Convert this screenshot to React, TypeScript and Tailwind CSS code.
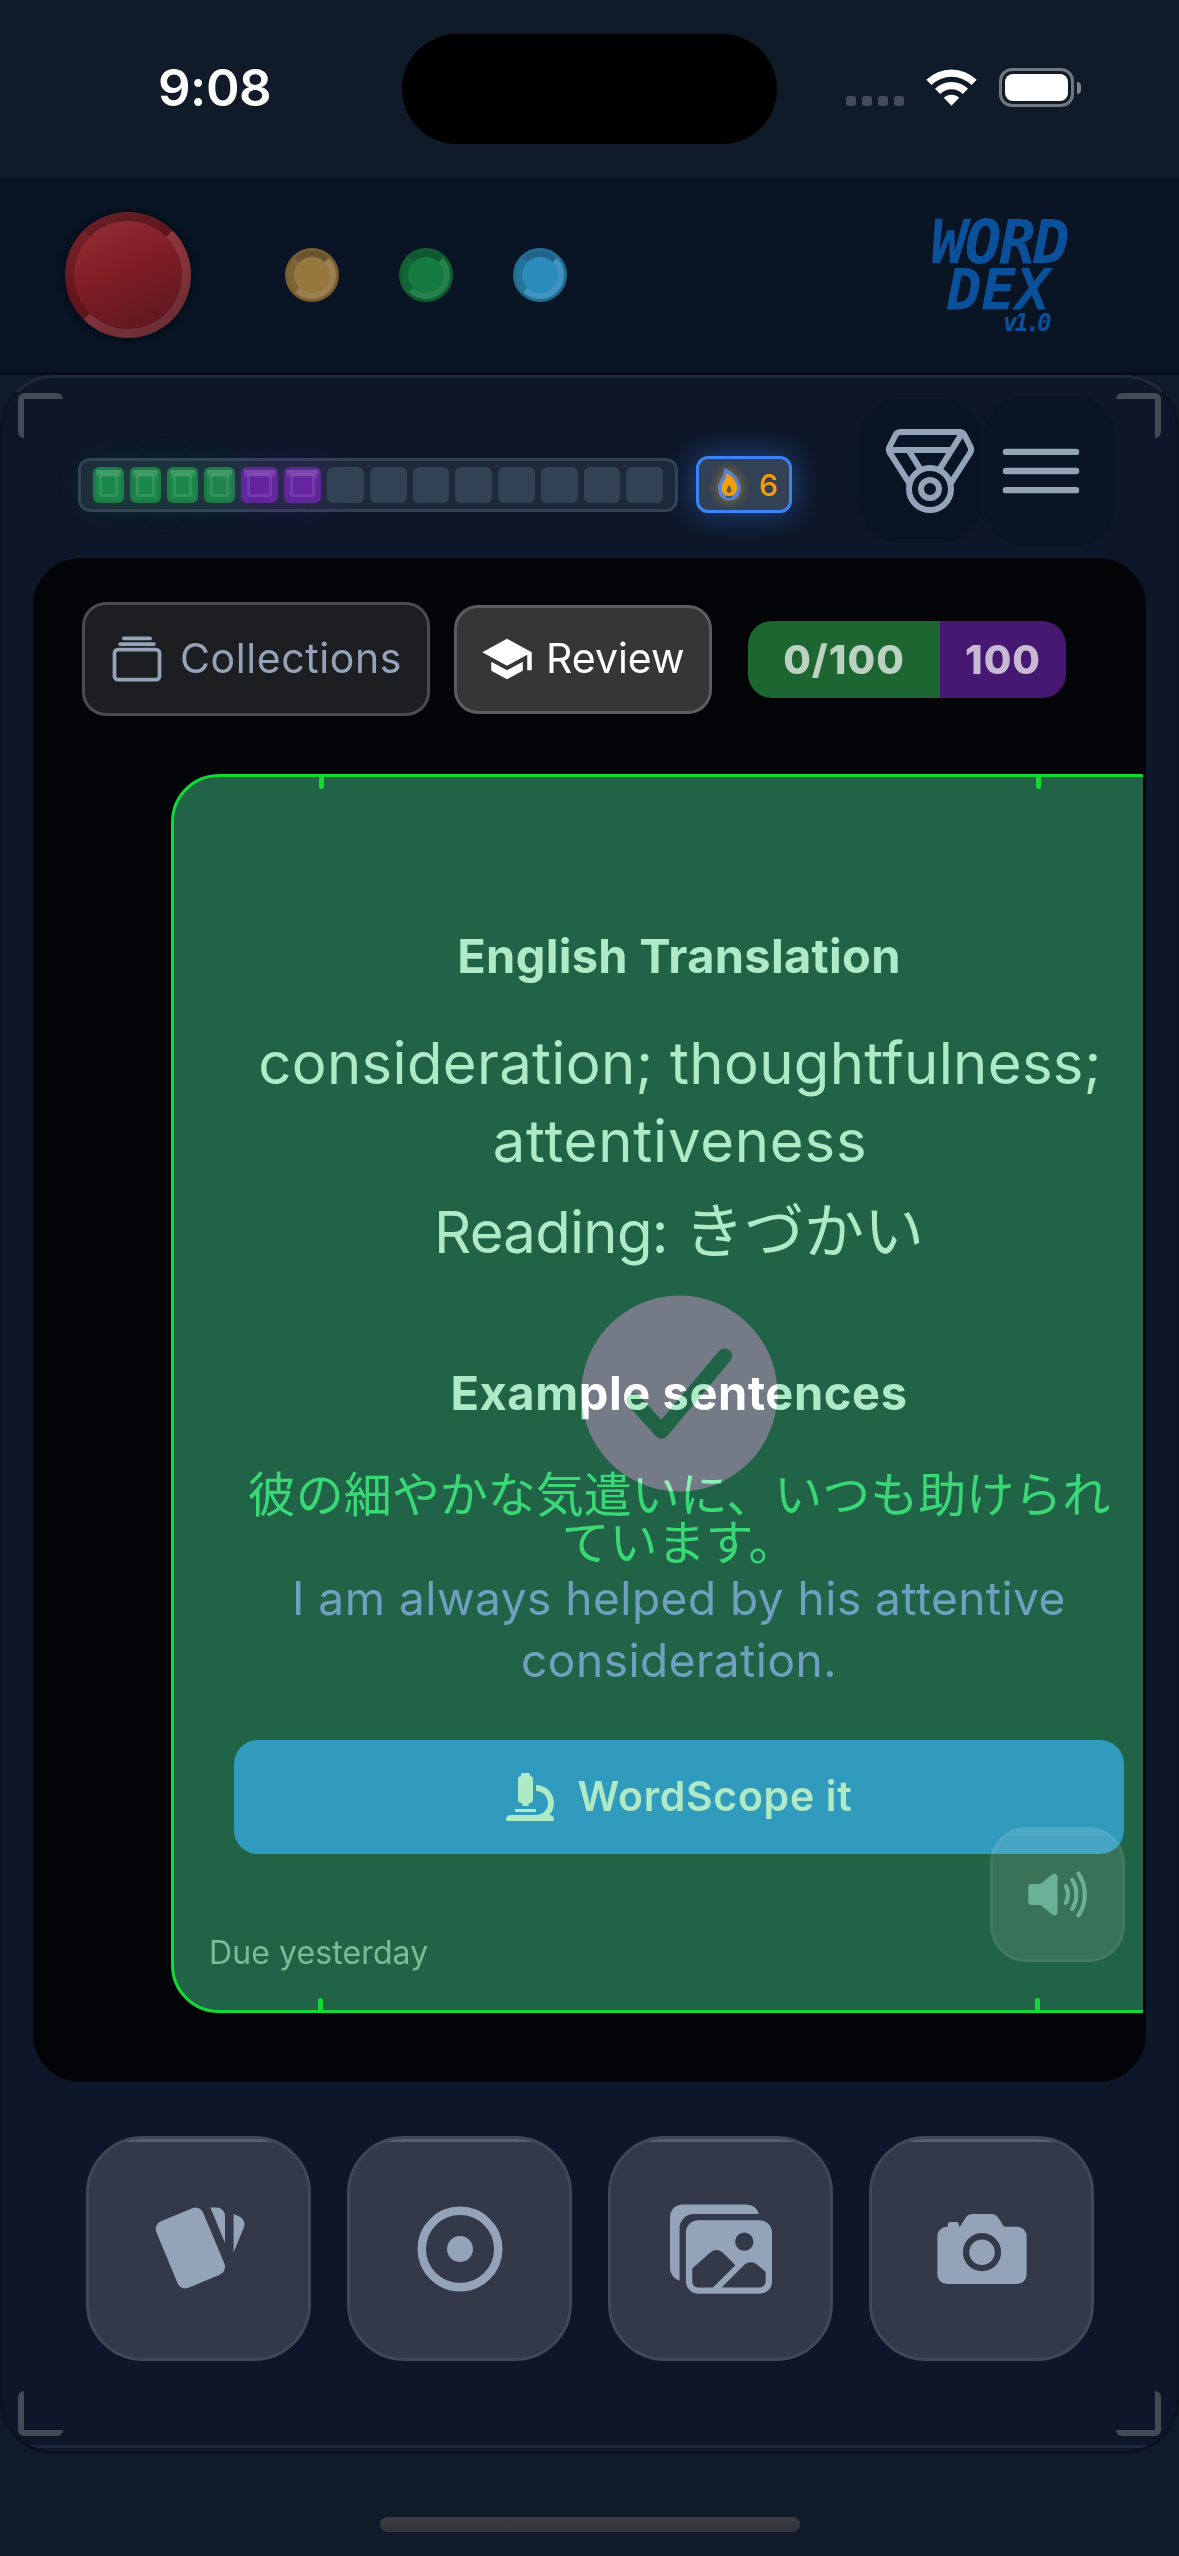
import type { ReactNode } from 'react';
import { FaMicroscope } from 'react-icons/fa';
import {
  IoAlbumsOutline,
  IoCamera,
  IoCheckmarkCircle,
  IoImages,
  IoMedalOutline,
  IoMenuOutline,
  IoVolumeHigh,
} from 'react-icons/io5';
import { MdSchool } from 'react-icons/md';

const SEGMENTS = [
  ...Array(4).fill('learned'),
  ...Array(2).fill('review'),
  ...Array(8).fill('empty'),
];

const LIGHTS = [
  {
    name: 'amber',
    outer: 'bg-[#775f31]',
    inner: 'bg-[#96783f] border-t-[#6b5430] border-l-[#7d6336] border-r-[#9a8051] border-b-[#9a8051]',
  },
  {
    name: 'green',
    outer: 'bg-[#115f31]',
    inner: 'bg-[#147a3f] border-t-[#0f5830] border-l-[#106636] border-r-[#27814e] border-b-[#27814e]',
  },
  {
    name: 'blue',
    outer: 'bg-[#226e93]',
    inner: 'bg-[#2b8bba] border-t-[#216487] border-l-[#24749b] border-r-[#4093be] border-b-[#4093be]',
  },
];

function StatusBar() {
  return (
    <div className="flex h-[177px] shrink-0 items-start pl-[158px]">
      <div className="mt-[58px] w-[244px] text-[51px] leading-[60px] font-semibold tracking-[-0.5px] text-white">9:08</div>
      <div className="mt-[34px] h-[110px] w-[375px] rounded-full bg-black" />
      <div className="mt-[67px] ml-[69px] flex w-[235px] items-start">
        <div className="mt-[29px] flex gap-[6px]">
          {[0, 1, 2, 3].map((i) => (
            <div key={i} className="size-[10px] rounded-[3px] bg-[#424b57]" />
          ))}
        </div>
        <svg className="mt-[2px] ml-[22px] h-[37px] w-[51px]" viewBox="0 0 51 37" fill="#fff">
          <path d="M0.3 10.8 A36 36 0 0 1 50.7 10.8 L45.5 16 A28.5 28.5 0 0 0 5.5 16 Z" />
          <path d="M9 19.8 A23.500 23.500 0 0 1 42 19.800 L36.800 25 A16 16 0 0 0 14.200 25 Z" />
          <path d="M17.8 28.800 A11 11 0 0 1 33.200 28.800 L25.500 36.800 Z" />
        </svg>
        <div className="mt-px ml-[22px] h-[39px] w-[75px] rounded-[13px] border-[3px] border-[#70777f] p-[3px]">
          <div className="h-full rounded-[8px] bg-white" />
        </div>
        <div className="mt-[15px] ml-[3px] h-[12px] w-[4px] rounded-r-full bg-[#7d848b]" />
      </div>
    </div>
  );
}

function Header() {
  return (
    <div className="flex h-[198px] shrink-0 items-start border-b-[3px] border-[#040c1b] bg-[#091424] pl-[65px]">
      <div className="mt-[35px] size-[126px] rounded-full border-[9px] border-t-black/30 border-r-white/10 border-b-white/10 border-l-black/20 bg-linear-[155deg] from-[#99333b] via-[#801d25] via-45% to-[#52171f] bg-origin-border shadow-[0_0_4px_4px_#07101d]" />
      <div className="mt-[71px] ml-[94px] flex gap-[60px]">
        {LIGHTS.map((light) => (
          <div key={light.name} className={`size-[54px] rounded-full p-[3px] ${light.outer}`}>
            <div className={`size-full rounded-full border-[6px] ${light.inner}`} />
          </div>
        ))}
      </div>
      <div className="mt-[41px] ml-[364px] flex w-[150px] flex-col font-['DejaVu_Sans_Mono'] font-bold text-[#0b509b] italic">
        <div className="text-[60px] leading-[48px] tracking-[-2px]">WORD</div>
        <div className="pl-[16px] text-[57px] leading-[48px] tracking-[0px]">DEX</div>
        <div className="pl-[72px] text-[24px] leading-[18px] tracking-[-3px]">v1.0</div>
      </div>
    </div>
  );
}

function Segment({ kind }: { kind: string }) {
  if (kind === 'empty') {
    return <div className="h-[36px] flex-1 rounded-[6px] bg-[#334155]" />;
  }
  const color =
    kind === 'learned'
      ? 'w-[31px] bg-[#1b864a] border-[#1f7a47] shadow-[0_0_36px_rgba(34,197,94,0.22)]'
      : 'w-[37px] bg-[#64249f] border-[#5c2a93] shadow-[0_0_36px_rgba(147,51,234,0.25)]';
  return (
    <div className={`h-[36px] shrink-0 rounded-[6px] border-[3px] ${color}`}>
      <div className="h-full bg-linear-to-b from-white/20 to-transparent to-30% p-[3px]">
        <div className="h-full rounded-[3px] border-[3px] border-white/10" />
      </div>
    </div>
  );
}

function Flame() {
  return (
    <svg className="h-[33px] w-[24px] drop-shadow-[0_0_6px_rgba(245,158,11,0.6)]" viewBox="0 0 24 33">
      <path d="M7 0 C14 2 23.500 11 23.500 20.500 C23.500 28 18.500 32.500 12 32.500 C6 32.500 1 28 1 20.500 C1 12 8 9 7 0Z" fill="#5585d6" />
      <path d="M9.500 5.500 C14 7 20 13 20 20 C20 25 16.500 28 12 28 C8 28 4.500 25 4.500 20 C4.500 14.500 9.500 12 9.500 5.500Z" fill="#f59e0b" />
      <path d="M12 17 C13.500 19 14.300 20.500 14.300 22.500 C14.300 24 13.300 25 12 25 C10.700 25 9.700 24 9.700 22.500 C9.700 20.500 10.500 19 12 17Z" fill="#6b5a35" />
      <path d="M9 28.500 Q12 30 15 28.500" stroke="#4b4a3c" strokeWidth="1.500" fill="none" />
    </svg>
  );
}

function StatsRow() {
  return (
    <div className="flex h-[180px] shrink-0 items-start pl-[75px]">
      <div className="mt-[80px] flex h-[54px] w-[600px] gap-[6px] rounded-[12px] border-[3px] border-[#334155] bg-[#1e293b] px-[12px] py-[6px]">
        {SEGMENTS.map((kind, i) => (
          <Segment key={i} kind={kind} />
        ))}
      </div>
      <div className="mt-[78px] ml-[18px] flex h-[57px] w-[96px] items-center rounded-[12px] border-[3px] border-[#3b82f6] bg-[#334155] pl-[18px] shadow-[0_0_30px_rgba(59,130,246,0.5)]">
        <Flame />
        <span className="ml-[18px] text-[30px] leading-[36px] font-medium text-[#f59e0b]">6</span>
      </div>
      <div className="mt-[21px] ml-[66px] flex h-[144px] w-[125px] justify-center rounded-[42px] bg-[#091424] pt-[24px] pl-[19px] text-[#94a3b8]">
        <IoMedalOutline className="size-[96px] shrink-0" />
      </div>
      <div className="mt-[18px] ml-px flex h-[150px] w-[132px] items-center justify-center rounded-[42px] bg-[#091424] pr-[18px] text-[#94a3b8]">
        <IoMenuOutline className="size-[102px] shrink-0" />
      </div>
    </div>
  );
}

function TopTabs() {
  return (
    <div className="flex h-[114px] shrink-0 items-center pl-[46px] text-[41px]">
      <button className="flex h-[114px] w-[348px] items-center rounded-[24px] border-[3px] border-[#4a4b4d] bg-[#1d1e21] pl-[22px] text-[#94a3b8]">
        <IoAlbumsOutline className="size-[60px] shrink-0" />
        <span className="ml-[13px] tracking-[0.6px]">Collections</span>
      </button>
      <button className="ml-[24px] flex h-[109px] w-[258px] items-center rounded-[24px] border-[3px] border-[#5c5d5f] bg-[#353638] pl-[23px] text-white">
        <MdSchool className="size-[54px] shrink-0" />
        <span className="ml-[12px]">Review</span>
      </button>
      <div className="ml-[36px] flex h-[77px] overflow-hidden rounded-[24px] text-[40px] leading-[77px] font-extrabold tracking-[1px]">
        <div className="w-[192px] bg-[#1d6631] text-center text-[#bbd1c1]">0/100</div>
        <div className="w-[126px] bg-[#471871] text-center text-[#c7b8d3]">100</div>
      </div>
    </div>
  );
}

function FlashCard() {
  return (
    <div className="relative mt-[58px] ml-[135px] h-[1239px] w-[1016px] shrink-0 rounded-[48px] border-[3px] border-[#12d936] bg-[#216347] text-center whitespace-nowrap text-[#aeeac5]">
      <div className="absolute top-0 left-[145px] h-[12px] w-[5px] rounded-b-full bg-[#12d936]" />
      <div className="absolute top-0 left-[862px] h-[12px] w-[5px] rounded-b-full bg-[#12d936]" />
      <div className="absolute bottom-0 left-[144px] h-[12px] w-[5px] rounded-t-full bg-[#12d936]" />
      <div className="absolute bottom-0 left-[861px] h-[12px] w-[5px] rounded-t-full bg-[#12d936]" />

      <h2 className="mt-[147px] text-[47px] leading-[64px] font-bold tracking-[0.3px]">English Translation</h2>
      <p className="mt-[36px] pl-[2px] text-[58px] leading-[78px] tracking-[0.35px]">
        consideration; thoughtfulness;
        <br />
        <span className="tracking-[0.8px]">attentiveness</span>
      </p>
      <p className="mt-[12px] text-[58px] leading-[78px]">
        <span className="tracking-[-0.7px]">Reading:</span> <span className="text-[60px]">きづかい</span>
      </p>

      <h2 className="mt-[90px] text-[47px] leading-[64px] font-bold tracking-[0.6px]">Example sentences</h2>
      <p className="mt-[46px] text-[48px] leading-[48px] text-[#3ad776]">
        彼の細やかな気遣いに、いつも助けられ
        <br />
        ています。
      </p>
      <p className="text-[46px] leading-[62.4px] tracking-[0.5px] text-[#6fa0bf]">
        I am always helped by his attentive
        <br />
        consideration.
      </p>

      <button className="mx-auto mt-[48px] flex h-[114px] w-[890px] items-center justify-center gap-[24px] rounded-[24px] bg-[#319bbd] text-[41px] font-semibold tracking-[0.7px]">
        <FaMicroscope className="size-[48px]" />
        WordScope it
      </button>
      <div className="mt-[79px] pl-[35px] text-left text-[32px] leading-[40px] tracking-[0.1px] text-[#7dbb94]">Due yesterday</div>

      {/* swipe feedback */}
      <IoCheckmarkCircle className="absolute top-[496px] left-[385px] size-[241px] text-[rgb(84,24,63)] mix-blend-plus-lighter" />

      <button className="absolute top-[1050px] left-[816px] flex size-[135px] items-center justify-center overflow-hidden rounded-[36px] border-[3px] border-white/5 bg-white/10 text-[#6bb197]">
        <div className="absolute top-0 right-[9px] left-[9px] h-[6px] bg-white/5" />
        <IoVolumeHigh className="size-[67px]" />
      </button>
    </div>
  );
}

function PadButton({ children }: { children: ReactNode }) {
  return (
    <button className="relative flex size-[225px] items-center justify-center overflow-hidden rounded-[57px] border-[3px] border-[#41465a] bg-[#333949] text-[#94a3b8]">
      <div className="absolute top-0 right-[27px] left-[27px] h-[3px] bg-[#595f6e]" />
      {children}
    </button>
  );
}

export default function App() {
  return (
    <div className="flex h-[2556px] w-[1179px] flex-col overflow-hidden bg-[#101b2a] font-[Inter,'Noto_Sans_CJK_JP',sans-serif]">
      <StatusBar />
      <Header />

      <div className="relative flex h-[2079px] shrink-0 flex-col overflow-hidden rounded-[54px] border-[3px] border-t-[#1f2739] border-r-[#0b1322] border-b-[#0a1120] border-l-[#0b1322] bg-[#0e1729]">
        <div className="absolute top-[15px] left-[15px] size-[45px] rounded-[6px] rounded-br-none border-t-[6px] border-l-[6px] border-[#444954]" />
        <div className="absolute top-[15px] right-[15px] size-[45px] rounded-[6px] rounded-bl-none border-t-[6px] border-r-[6px] border-[#444954]" />
        <div className="absolute bottom-[15px] left-[15px] size-[45px] rounded-[6px] rounded-tr-none border-b-[6px] border-l-[6px] border-[#444954]" />
        <div className="absolute right-[15px] bottom-[15px] size-[45px] rounded-[6px] rounded-tl-none border-r-[6px] border-b-[6px] border-[#444954]" />
        <div className="absolute right-0 bottom-[3px] left-0 h-[3px] bg-[#1f2739]" />

        <StatsRow />

        <div className="isolate mx-[30px] flex h-[1524px] shrink-0 flex-col overflow-hidden rounded-[48px] border-[3px] border-[#030407] bg-[#030407] pt-[41px]">
          <TopTabs />
          <FlashCard />
        </div>

        <div className="mt-[54px] flex gap-[36px] pl-[83px]">
          <PadButton>
            <svg className="size-[102px]" viewBox="0 0 24 24" fill="currentColor">
              <path d="M21.470 4.350L20.130 3.790V12.820L22.560 6.960C22.970 5.940 22.500 4.770 21.470 4.350M1.970 8.050L6.930 20C7.240 20.770 7.970 21.240 8.740 21.260C9 21.260 9.270 21.210 9.530 21.100L16.900 18.050C17.650 17.740 18.110 17 18.130 16.260C18.140 16 18.090 15.710 18 15.450L13 3.500C12.710 2.730 11.970 2.260 11.190 2.250C10.930 2.250 10.670 2.310 10.420 2.400L3.060 5.450C2.040 5.870 1.550 7.040 1.970 8.050M18.120 4.250A2 2 0 0 0 16.120 2.250H14.670L18.120 10.590" />
            </svg>
          </PadButton>
          <PadButton>
            <svg className="size-[102px]" viewBox="0 0 24 24" fill="none">
              <circle cx="12" cy="12" r="9" stroke="currentColor" strokeWidth="2" />
              <circle cx="12" cy="12" r="3.050" fill="currentColor" />
            </svg>
          </PadButton>
          <PadButton>
            <IoImages className="size-[102px]" />
          </PadButton>
          <PadButton>
            <IoCamera className="size-[102px]" />
          </PadButton>
        </div>
      </div>

      <div className="mx-auto mt-[63px] h-[15px] w-[420px] shrink-0 rounded-full bg-linear-to-b from-[#3c3d3f] to-[#30343b]" />
    </div>
  );
}
